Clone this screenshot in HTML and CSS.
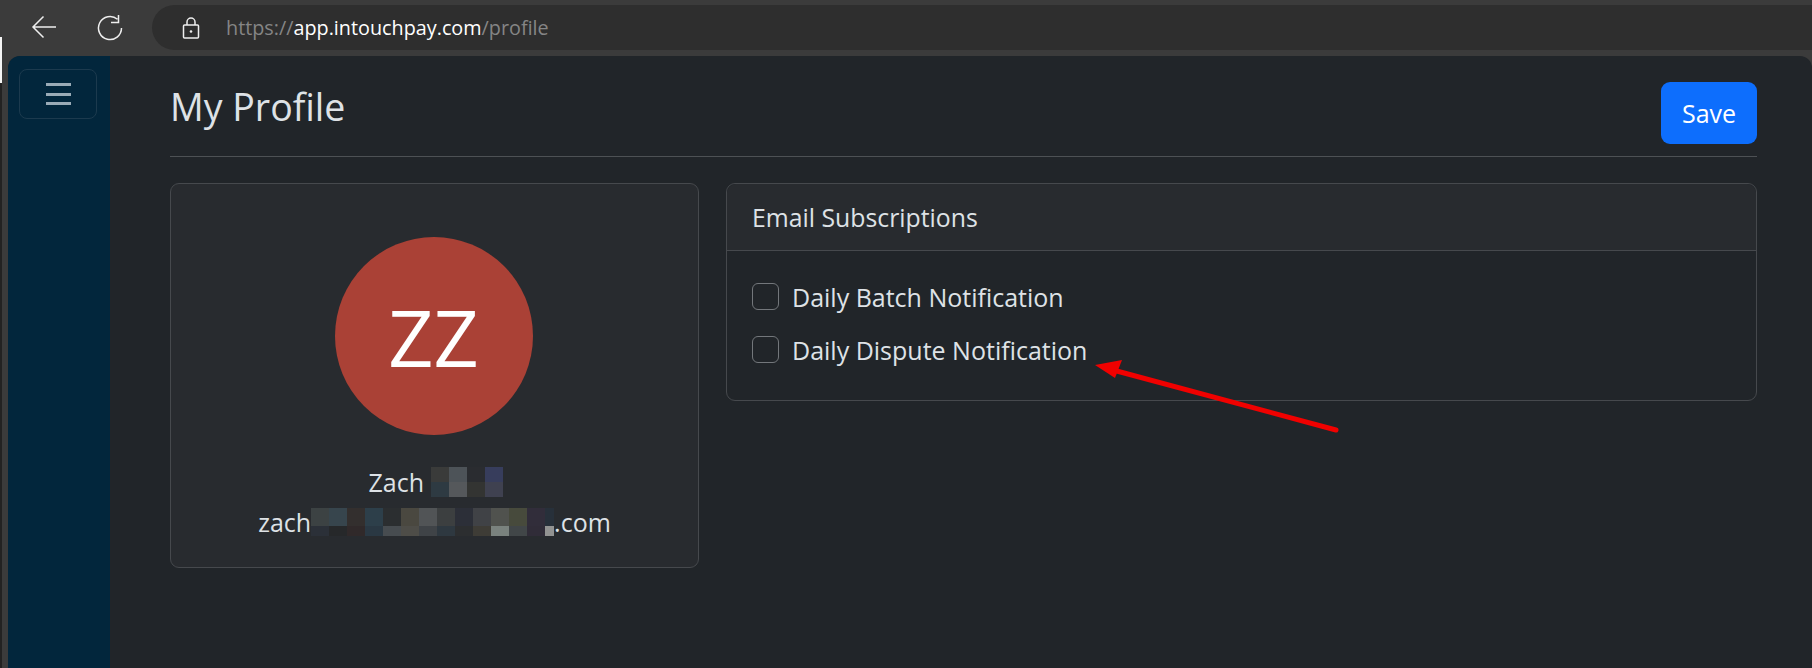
FILE: index.html
```html
<!DOCTYPE html>
<html>
   <head>
      <meta charset="UTF-8">
      <title>My Profile</title>
      <link rel="stylesheet" href="styles.css">
   </head>
   <body>
      <div class="edge"></div>
      <div class="toolbar">
         <svg class="nav__icon nav__back" width="30" height="30" viewBox="0 0 30 30"><path d="M27 15H4M14.5 4.5 4 15l10.5 10.5" fill="none" stroke="#eee" stroke-width="1.5"/></svg>
         <svg class="nav__icon nav__reload" width="30" height="30" viewBox="0 0 30 30"><path d="M26.5 16A11.5 11.5 0 1 1 22.5 7.3M23.5 3v7.5H16" fill="none" stroke="#eee" stroke-width="1.5"/></svg>
         <div class="address">
            <svg class="address__lock" width="20" height="22" viewBox="0 0 20 22"><path d="M6 8V5a4 4 0 0 1 8 0v3M3.5 8h13a1 1 0 0 1 1 1v11a1 1 0 0 1-1 1h-13a1 1 0 0 1-1-1V9a1 1 0 0 1 1-1z" fill="none" stroke="#eee" stroke-width="1.5"/><circle cx="10" cy="14.5" r="1.3" fill="#eee"/></svg>
            <span class="address__dim">https://</span><span class="address__host">app.intouchpay.com</span><span class="address__dim">/profile</span>
         </div>
      </div>
      <div class="window">
         <div class="sidebar">
            <div class="menu__btn"><span></span><span></span><span></span></div>
         </div>
         <div class="main">
            <div class="page__header">
               <h1>My Profile</h1>
               <span class="btn__save">Save</span>
            </div>
            <div class="cards">
               <div class="card card__profile">
                  <div class="avatar">ZZ</div>
                  <div class="user__name">Zach <span class="blur blur__name"><i></i><i></i><i></i><i></i><i></i><i></i><i></i><i></i></span></div>
                  <div class="user__email">zach<span class="blur blur__email"><i></i><i></i><i></i><i></i><i></i><i></i><i></i><i></i><i></i><i></i><i></i><i></i><i></i><i></i><i></i><i></i><i></i><i></i><i></i><i></i><i></i><i></i><i></i><i></i><i></i><i></i><i></i><i></i></span>.com</div>
               </div>
               <div class="card card__email">
                  <div class="card__head">Email Subscriptions</div>
                  <div class="card__body">
                     <label class="check"><span class="check__box"></span>Daily Batch Notification</label>
                     <label class="check"><span class="check__box"></span>Daily Dispute Notification</label>
                  </div>
               </div>
            </div>
         </div>
         <svg class="arrow" width="260" height="80" viewBox="0 0 260 80"><path d="M253 74 30 14" fill="none" stroke="#f00100" stroke-width="5" stroke-linecap="round"/><path d="M12 9 39 4 32 22z" fill="#f00100"/></svg>
      </div>
   </body>
</html>
```

FILE: styles.css
```css
* {
  box-sizing: border-box;
}
html, body {
    height: 100%;
}
body {
    margin: 0;
    overflow: hidden;
    position: relative;
    display: flex;
    flex-direction: column;
    background-color: #3b3b3b;
    color: #dee2e6;
    font-family: "Open Sans", "Noto Sans", sans-serif;
}
/* Sliver of another window at the left edge */
.edge {
    position: absolute;
    left: 0;
    top: 0;
    bottom: 0;
    width: 2px;
    background: linear-gradient(#3b3b3b 37px, #f5f5f5 37px, #f5f5f5 83px, #222 83px);
}
/* Browser bar */
.toolbar {
    height: 56px;
    flex: none;
    padding: 5px 0 6px 29px;
    display: flex;
    background-color: #3b3b3b;
}
.nav__icon {
    flex: none;
    margin-top: 7px;
}
.nav__back {
    margin-right: 36px;
}
.nav__reload {
    margin-right: 27px;
}
.address {
    flex: 1;
    padding-left: 29px;
    display: flex;
    align-items: center;
    background-color: #2e2e2e;
    border-radius: 23px 0 0 23px;
    font-size: 19.8px;
}
.address__lock {
    margin-right: 25px;
}
.address__dim {
    color: #858585;
}
.address__host {
    color: #fff;
}
/* App window */
.window {
    flex: 1;
    position: relative;
    display: flex;
    margin-left: 8px;
    border-radius: 12px 12px 0 0;
    background-color: #212529;
    overflow: hidden;
}
.sidebar {
    width: 102px;
    flex: none;
    padding: 13px 11px;
    background-color: #02263c;
}
.menu__btn {
    width: 78px;
    height: 50px;
    display: flex;
    flex-direction: column;
    justify-content: center;
    align-items: center;
    gap: 6.5px;
    border: 1px solid #1c3a4e;
    border-radius: 8px;
}
.menu__btn span {
    width: 25px;
    height: 3px;
    background-color: #9aabb7;
}
.main {
    flex: 1;
    padding: 24px 55px 0 60px;
}
.page__header {
    height: 77px;
    display: flex;
    justify-content: space-between;
    align-items: flex-start;
    border-bottom: 1px solid #4d5154;
}
h1 {
    margin: 2px 0 0;
    font-size: 37.5px;
    font-weight: 400;
    line-height: 50px;
}
.btn__save {
    width: 96px;
    height: 62px;
    margin-top: 2px;
    display: flex;
    align-items: center;
    justify-content: center;
    background-color: #0d6efd;
    border-radius: 9px;
    color: #fff;
    font-size: 25px;
}
.cards {
    margin-top: 26px;
    display: flex;
    align-items: flex-start;
    gap: 27px;
}
.card {
    border: 1px solid #46494d;
    border-radius: 9px;
}
.card__profile {
    width: 529px;
    height: 385px;
    padding-top: 53px;
    display: flex;
    flex-direction: column;
    align-items: center;
    background-color: #282b2f;
    font-size: 25px;
}
.avatar {
    width: 198px;
    height: 198px;
    margin-right: 2px;
    margin-bottom: 27px;
    display: flex;
    align-items: center;
    justify-content: center;
    border-radius: 50%;
    background-color: #aa4136;
    color: #fff;
    font-size: 79px;
}
.user__name, .user__email {
    height: 40px;
    display: flex;
    align-items: center;
    white-space: pre;
}
.user__name {
    padding-left: 2px;
}
/* Pixelated parts of the name and the address */
.blur {
    display: inline-grid;
    grid-auto-flow: column;
}
.blur i {
    display: block;
}
.blur__name {
    grid-template-rows: 15px 15px;
    grid-auto-columns: 18px;
}
.blur__email {
    grid-template-rows: 18px 10px;
    grid-template-columns: repeat(13, 18px) 9px;
}
.blur__name i:nth-child(1) { background-color: #3a3b3a; }
.blur__name i:nth-child(2) { background-color: #2e3a42; }
.blur__name i:nth-child(3) { background-color: #4d5358; }
.blur__name i:nth-child(4) { background-color: #55585b; }
.blur__name i:nth-child(5) { background-color: #2a2c30; }
.blur__name i:nth-child(6) { background-color: #333432; }
.blur__name i:nth-child(7) { background-color: #373d5c; }
.blur__name i:nth-child(8) { background-color: #3f4150; }
.blur__email i:nth-child(1) { background-color: #3c4243; }
.blur__email i:nth-child(2) { background-color: #2b3038; }
.blur__email i:nth-child(3) { background-color: #37454d; }
.blur__email i:nth-child(4) { background-color: #26282a; }
.blur__email i:nth-child(5) { background-color: #332f2e; }
.blur__email i:nth-child(6) { background-color: #30292a; }
.blur__email i:nth-child(7) { background-color: #2d3f4a; }
.blur__email i:nth-child(8) { background-color: #2a3843; }
.blur__email i:nth-child(9) { background-color: #2b2e30; }
.blur__email i:nth-child(10) { background-color: #474c50; }
.blur__email i:nth-child(11) { background-color: #4a4840; }
.blur__email i:nth-child(12) { background-color: #4e4d48; }
.blur__email i:nth-child(13) { background-color: #515456; }
.blur__email i:nth-child(14) { background-color: #3f4347; }
.blur__email i:nth-child(15) { background-color: #3c3f40; }
.blur__email i:nth-child(16) { background-color: #2e3840; }
.blur__email i:nth-child(17) { background-color: #2c2f38; }
.blur__email i:nth-child(18) { background-color: #2c2e30; }
.blur__email i:nth-child(19) { background-color: #404246; }
.blur__email i:nth-child(20) { background-color: #3e3c36; }
.blur__email i:nth-child(21) { background-color: #50524e; }
.blur__email i:nth-child(22) { background-color: #7a827e; }
.blur__email i:nth-child(23) { background-color: #474a3c; }
.blur__email i:nth-child(24) { background-color: #414648; }
.blur__email i:nth-child(25) { background-color: #312d3a; }
.blur__email i:nth-child(26) { background-color: #302c38; }
.blur__email i:nth-child(27) { background-color: #27303a; }
.blur__email i:nth-child(28) { background-color: #929392; }
.card__email {
    flex: 1;
    height: 218px;
}
.card__head {
    height: 67px;
    padding-left: 25px;
    display: flex;
    align-items: center;
    background-color: #282b2f;
    border-bottom: 1px solid #46494d;
    border-radius: 9px 9px 0 0;
    font-size: 24.8px;
}
.card__body {
    padding: 19px 25px;
}
.check {
    height: 53px;
    display: flex;
    align-items: center;
    font-size: 25px;
}
.check__box {
    width: 27px;
    height: 27px;
    margin-right: 13px;
    border: 1px solid #73777b;
    border-radius: 6px;
}
/* Annotation over the card */
.arrow {
    position: absolute;
    left: 1075px;
    top: 300px;
}
```
